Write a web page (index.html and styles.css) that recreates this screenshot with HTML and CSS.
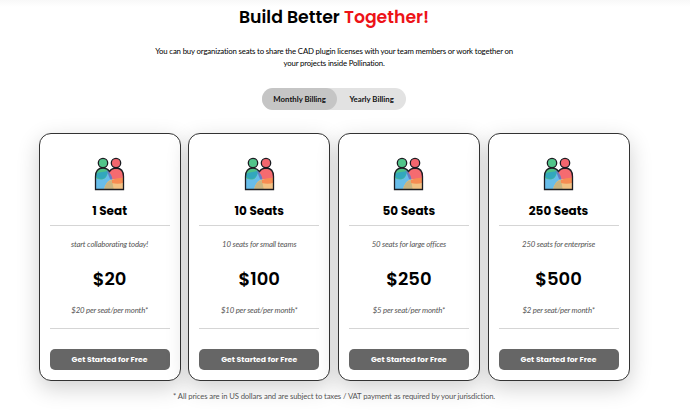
FILE: index.html
```html
<!DOCTYPE html>
<html lang="en">
<head>
<meta charset="utf-8">
<title>Pricing</title>
<link rel="stylesheet" href="styles.css">
</head>
<body>
<svg width="0" height="0" class="defs" aria-hidden="true">
  <defs>
    <clipPath id="body-clip"><path d="M1.500 32.500V19.500Q1.500 11 9 11Q13 11 15.500 14.500Q18 11 22.500 11Q29.500 11.500 29.500 19.500V32.500Z"/></clipPath>
    <symbol id="team" viewBox="0 0 31 34">
      <g clip-path="url(#body-clip)">
        <rect width="31" height="34" fill="#f56b70"/>
        <path d="M0 8H11Q15 15 18 21L10 25H0Z" fill="#4fc286"/>
        <path d="M0 19Q3 23 8 22.500Q13 22 14 14L19 23L10 34H0Z" fill="#68bdea"/>
        <path d="M1 17Q2 22 8 22Q13 21 14 14Q6 15 1 17Z" fill="#32a7bd"/>
        <path d="M12.500 13Q18 17 18.500 23L16 22Z" fill="#677bc2"/>
        <path d="M10 34Q11 23 20 22Q27 22 31 27V34Z" fill="#f2c184"/>
        <path d="M10 34Q11 24 18 23L20 34Z" fill="#c9b482"/>
        <path d="M18 23Q25 20 31 21V25Q25 28 18 26Z" fill="#f78c53"/>
      </g>
      <circle cx="9" cy="6" r="4.500" fill="#52c58a"/>
      <circle cx="22" cy="6" r="4.500" fill="#f4666e"/>
      <g fill="none" stroke="#1c1c22" stroke-width="1.300">
        <circle cx="9" cy="6" r="4.700"/><circle cx="22" cy="6" r="4.700"/>
        <path d="M1.500 32.500V19.500Q1.500 11 9 11Q13 11 15.500 14.500Q18 11 22.500 11Q29.500 11.500 29.500 19.500V32.500Z"/>
      </g>
    </symbol>
  </defs>
</svg>
<main class="page">
  <h1 class="title">Build Better <span class="accent">Together!</span></h1>
  <p class="intro">You can buy organization seats to share the CAD plugin licenses with your team members or work together on<br>your projects inside Pollination.</p>
  <div class="toggle">
    <button class="option selected">Monthly Billing</button>
    <button class="option">Yearly Billing</button>
  </div>
  <section class="plans">
    <article class="card">
      <svg class="icon"><use href="#team"/></svg>
      <h2 class="seats">1 Seat</h2>
      <p class="note top">start collaborating today!</p>
      <p class="price">$20</p>
      <p class="note bottom">$20 per seat/per month*</p>
      <button class="cta">Get Started for Free</button>
    </article>
    <article class="card">
      <svg class="icon"><use href="#team"/></svg>
      <h2 class="seats">10 Seats</h2>
      <p class="note top">10 seats for small teams</p>
      <p class="price">$100</p>
      <p class="note bottom">$10 per seat/per month*</p>
      <button class="cta">Get Started for Free</button>
    </article>
    <article class="card">
      <svg class="icon"><use href="#team"/></svg>
      <h2 class="seats">50 Seats</h2>
      <p class="note top">50 seats for large offices</p>
      <p class="price">$250</p>
      <p class="note bottom">$5 per seat/per month*</p>
      <button class="cta">Get Started for Free</button>
    </article>
    <article class="card">
      <svg class="icon"><use href="#team"/></svg>
      <h2 class="seats">250 Seats</h2>
      <p class="note top">250 seats for enterprise</p>
      <p class="price">$500</p>
      <p class="note bottom">$2 per seat/per month*</p>
      <button class="cta">Get Started for Free</button>
    </article>
  </section>
  <p class="footnote">* All prices are in US dollars and are subject to taxes / VAT payment as required by your jurisdiction.</p>
</main>
</body>
</html>
```
FILE: styles.css
```css
* { box-sizing: border-box; margin: 0; }
body { background: #fff; color: #000; font-family: Lato, sans-serif; overflow: hidden; }
button { border: 0; font: inherit; padding: 0; white-space: nowrap; }
.defs { position: absolute; }
.page { height: 415px; padding: 5px 60px 0 38.6px; background: linear-gradient(#f8f8f8, #fff 7px); }
.title { width: 591px; height: 24px; text-align: center; font: 600 17.3px/24px Poppins, Inter, sans-serif; white-space: nowrap; }
.accent { color: #ed1317; }
.intro { width: 591px; margin-top: 16px; font-size: 7.8px; letter-spacing: -0.16px; line-height: 12px; text-align: center; white-space: nowrap; }
.toggle { display: flex; width: 144px; height: 22px; margin: 19px 0 0 223.5px; border-radius: 11px; background: #e2e2e2; }
.option { width: 69px; border-radius: 11px; background: none; font-size: 7.8px; font-weight: 700; color: #111; }
.selected { width: 75px; background: #c5c5c5; }
.plans { display: grid; grid-template-columns: repeat(4, 142px); column-gap: 7.65px; width: 592px; margin-top: 23px; }
.card { display: flex; flex-direction: column; align-items: center; height: 248px; padding: 23px 10px 0; border: 1px solid #333; border-radius: 12px; background: #fff; box-shadow: 0 7px 22px rgba(0,0,0,.19); }
.icon { width: 31px; height: 34px; flex: none; }
.seats { width: 120px; height: 35px; padding-top: 11px; border-bottom: 1px solid #d5d5d5; font: 700 12px/18px Poppins, Inter, sans-serif; text-align: center; }
.note { color: #555; font-size: 7.8px; letter-spacing: -0.17px; font-style: italic; line-height: 12px; text-align: center; white-space: nowrap; }
.top { margin-top: 12px; }
.price { margin-top: 16px; font: 600 18px/26px Poppins, Inter, sans-serif; }
.bottom { width: 120px; height: 37px; padding-top: 12px; border-bottom: 1px solid #d5d5d5; }
.cta { width: 120px; height: 21px; margin-top: 20px; border-radius: 5px; background: #666; color: #fff; font: 700 7.7px/21px Poppins, Inter, sans-serif; }
.footnote { width: 591px; margin-top: 9px; color: #555; font-size: 7.7px; letter-spacing: -0.11px; line-height: 12px; text-align: center; white-space: nowrap; }
```
